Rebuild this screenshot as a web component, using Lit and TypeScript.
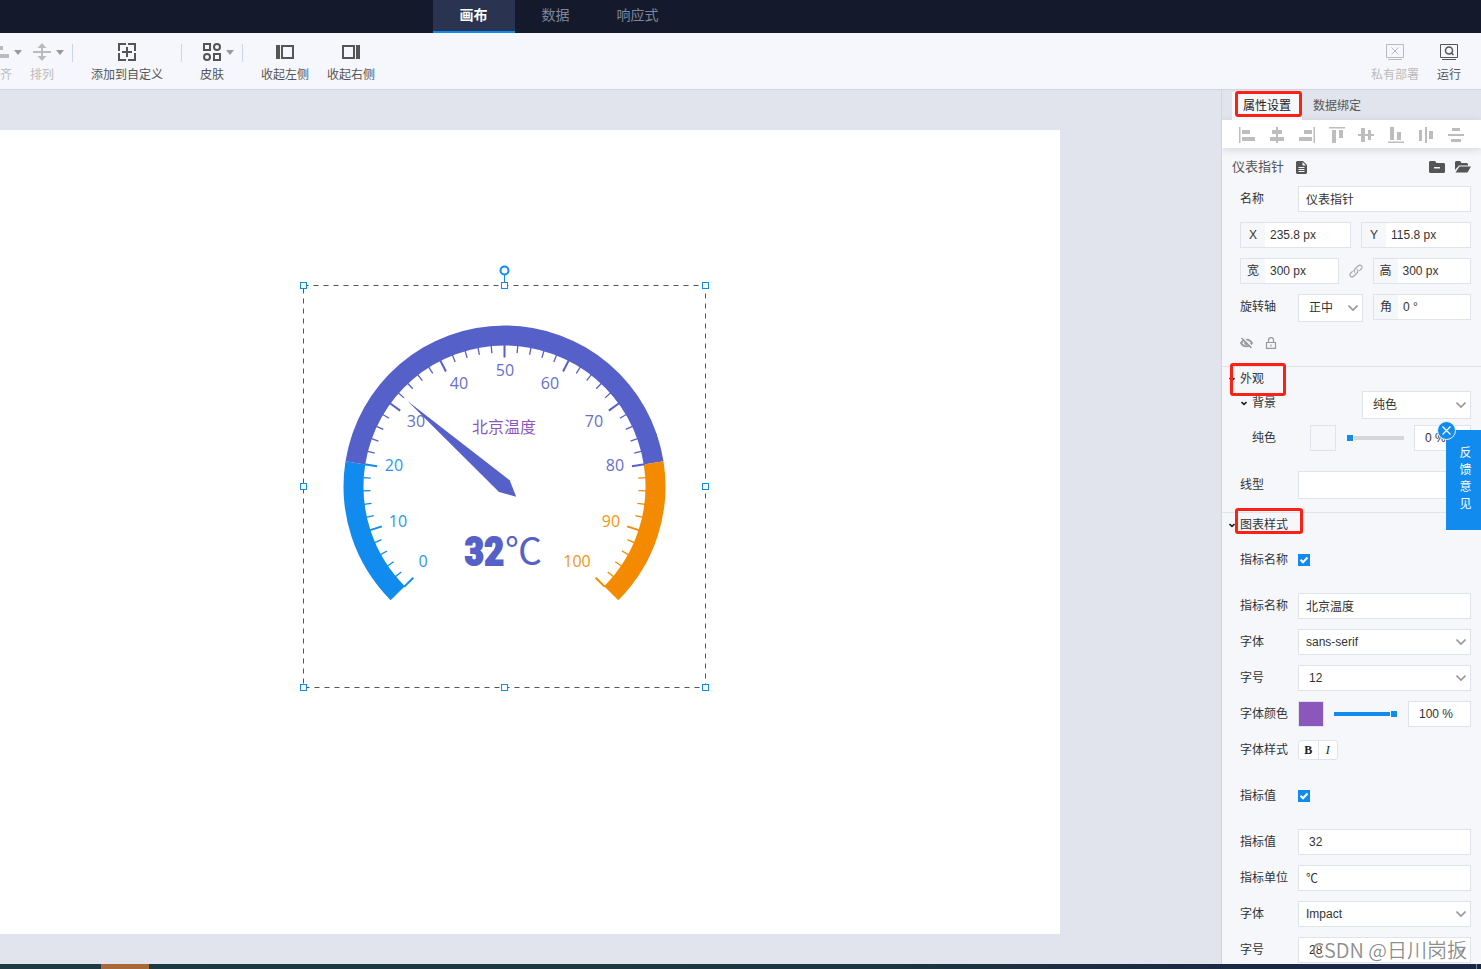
import { LitElement, html, svg, css } from "lit";
import { customElement, state } from "lit/decorators.js";

const FONT = css`"Liberation Sans", "Noto Sans CJK SC", sans-serif`;

const BLUE = "#118bee";
const PURPLE = "#5560c8";
const ORANGE = "#f48a00";

/** Gauge widget with its selection frame, drawn around a 402px square. */
@customElement("gauge-widget")
export class GaugeWidget extends LitElement {
  static styles = css`
    :host { display: block; }
    svg { display: block; overflow: visible; }
    .frame { fill: none; stroke: #555; stroke-dasharray: 5 5; }
    .handle { fill: #fff; stroke: #118bee; }
    .knob { fill: #fff; stroke: #118bee; stroke-width: 2; }
    .stem { stroke: #118bee; }
    .scale { font: 16px "Open Sans", "Noto Sans", sans-serif; text-anchor: middle; opacity: 0.9; }
    .name { font: 16px "Noto Sans CJK SC", sans-serif; text-anchor: middle; fill: #8c57bd; }
    .value { font: bold 39px Impact, "Liberation Sans Narrow", "Roboto Condensed", sans-serif; fill: #5560c8; stroke: #5560c8; stroke-width: 2; text-anchor: end; }
    .unit { font: 37px "Noto Sans CJK SC", sans-serif; fill: #5560c8; }
  `;

  private readonly c = 201.5;
  private readonly labels: [number, number, number][] = [
    [0, 120, 277], [10, 95, 237], [20, 91, 181], [30, 113, 137], [40, 156, 99], [50, 202, 86],
    [60, 247, 99], [70, 291, 137], [80, 312, 181], [90, 308, 237], [100, 274, 277],
  ];

  private point(value: number, r: number) {
    const a = ((225 - value * 2.7) * Math.PI) / 180;
    return [this.c + r * Math.cos(a), this.c - r * Math.sin(a)];
  }

  private arc(from: number, to: number, color: string) {
    const [x0, y0] = this.point(from, 161);
    const [x1, y1] = this.point(to, 161);
    const [x2, y2] = this.point(to, 141);
    const [x3, y3] = this.point(from, 141);
    return svg`<path fill=${color} d="M${x0} ${y0}A161 161 0 0 1 ${x1} ${y1}L${x2} ${y2}A141 141 0 0 0 ${x3} ${y3}Z"></path>`;
  }

  private colorAt(v: number) {
    return v <= 20 ? BLUE : v < 81 ? PURPLE : ORANGE;
  }

  render() {
    const ticks = Array.from({ length: 51 }, (_, i) => i * 2);
    const ends = [0.5, 201.5, 402.5];
    return html`
      <svg width="403" height="403" viewBox="0 0 403 403" role="img" aria-label="北京温度 32℃">
        ${this.arc(0, 20, BLUE)} ${this.arc(20, 80, PURPLE)} ${this.arc(80, 100, ORANGE)}
        ${ticks.map((v) => {
          const major = v % 10 === 0;
          const [x1, y1] = this.point(v, 142);
          const [x2, y2] = this.point(v, major ? 129 : 134);
          return svg`<line x1=${x1} y1=${y1} x2=${x2} y2=${y2} stroke=${this.colorAt(v)} stroke-width=${major ? 2 : 1.3}></line>`;
        })}
        ${this.labels.map(([v, x, y]) => svg`<text class="scale" x=${x} y=${y + 5} fill=${this.colorAt(v)}>${v}</text>`)}
        <text class="name" x="201" y="148">北京温度</text>
        <path fill=${PURPLE} d="M104.5 116L206.7 195.3L213.2 211.8L196 207Z"></path>
        <text class="value" x="201" y="280">32</text>
        <text class="unit" x="202" y="280">℃</text>
        <rect class="frame" x="0.5" y="0.5" width="402" height="402"></rect>
        <line class="stem" x1="201.5" y1="-11" x2="201.5" y2="-2"></line>
        <circle class="knob" cx="201.5" cy="-14.5" r="4"></circle>
        ${ends.flatMap((y) => ends.filter((x) => !(x === 201.5 && y === 201.5)).map(
          (x) => svg`<rect class="handle" x=${x - 3} y=${y - 3} width="6" height="6"></rect>`))}
      </svg>`;
  }
}

@customElement("property-panel")
export class PropertyPanel extends LitElement {
  static styles = css`
    :host { display: block; position: relative; box-sizing: border-box; width: 260px; border-left: 1px solid #ccd5e4; background: #f5f7fb; color: #333; font: 12px/18px ${FONT}; }
    *, *::before, *::after { box-sizing: border-box; }
    .clip { height: 100%; overflow: hidden; }
    button, input, select { font: inherit; color: inherit; margin: 0; border-radius: 0; outline: none; }
    button { padding: 0; border: 0; background: none; cursor: pointer; }
    svg { display: block; }
    .tabs { display: flex; height: 30px; padding: 2px 0 0 10px; background: #e1e4ec; }
    .tab { padding: 0 11px; color: #555; }
    .tab.on { background: #f5f7fb; color: #222; }
    .aligns { display: flex; justify-content: space-between; align-items: center; height: 28px; padding: 2px 17px 0; background: #fff; box-shadow: 0 2px 8px rgba(0, 0, 0, 0.13); fill: #bdbdbd; }
    .head { display: flex; align-items: center; height: 38px; padding: 0 10px; gap: 10px; color: #555; font-size: 13px; }
    .head .title { flex: 0 1 auto; margin-right: 2px; }
    .head .push { margin-left: auto; }
    .rows { display: flex; flex-direction: column; gap: 10px; padding: 0 10px 0 18px; }
    .row { display: grid; grid-template-columns: 58px minmax(0, 1fr); align-items: center; min-height: 26px; }
    .pair { display: grid; grid-template-columns: 111px minmax(0, 1fr); column-gap: 10px; }
    .size { display: grid; grid-template-columns: minmax(0, 1fr) 34px minmax(0, 1fr); align-items: center; justify-items: stretch; }
    .size svg { justify-self: center; }
    .axis { display: grid; grid-template-columns: 58px 65px minmax(0, 1fr); align-items: start; }
    .axis .field { margin-left: 10px; }
    .axis > label { line-height: 26px; }
    .field { display: flex; height: 26px; border: 1px solid #dfe3ec; background: #fff; }
    .field label { width: 24px; background: #f5f7fb; line-height: 24px; text-align: center; }
    .field input { flex: 1; min-width: 0; border: 0; padding: 0 5px; background: transparent; }
    .box { width: 100%; height: 26px; border: 1px solid #dfe3ec; background: #fff; padding: 0 7px; }
    .box.num { padding: 0 10px; }
    .box.han { padding-bottom: 2px; }
    .box.tall { height: 28px; }
    .pick { display: grid; align-items: center; }
    .pick > * { grid-area: 1 / 1; }
    .pick select { appearance: none; }
    .pick svg { justify-self: end; margin-right: 5px; pointer-events: none; }
    .flags { display: flex; align-items: center; gap: 12px; height: 44px; padding: 0 0 2px 18px; }
    .group { border-top: 1px solid #dfe3ec; }
    .fold { display: flex; align-items: center; height: 24px; gap: 5px; padding-left: 7px; }
    .looks { padding: 0 10px 13px 18px; }
    .back { display: grid; grid-template-columns: 122px minmax(0, 1fr); align-items: start; }
    .back .fold { padding-left: 1px; }
    .fill { display: grid; grid-template-columns: 48px 26px minmax(0, 1fr) 57px; column-gap: 10px; align-items: center; margin: 6px 0 20px 12px; }
    .ink { display: grid; grid-template-columns: 26px minmax(0, 1fr) 63px; column-gap: 10px; align-items: center; }
    .color { appearance: none; width: 26px; height: 26px; padding: 0; border: 1px solid #dfe3ec; background: none; }
    .color::-webkit-color-swatch-wrapper { padding: 0; }
    .color::-webkit-color-swatch { border: 0; border-radius: 0; }
    .range { appearance: none; width: 100%; min-width: 0; height: 8px; background: linear-gradient(#d6d6d6, #d6d6d6) center / 100% 4px no-repeat; }
    .range.full { background-image: linear-gradient(#118bee, #118bee); }
    .range::-webkit-slider-thumb { appearance: none; width: 8px; height: 8px; border: 1px solid #f5f7fb; background: #118bee; }
    .check { display: grid; width: 12px; height: 12px; }
    .check > * { grid-area: 1 / 1; }
    .check input { appearance: none; width: 12px; height: 12px; background: #fff; border: 1px solid #ccc; }
    .check input:checked { background: #118bee; border: 0; }
    .check svg { pointer-events: none; }
    .styles { display: flex; width: 40px; height: 20px; border: 1px solid #dfe3ec; border-radius: 3px; background: #fff; font-family: "Liberation Serif", serif; font-size: 12px; }
    .styles button { flex: 1; color: #222; }
    .styles button + button { border-left: 1px solid #dfe3ec; }
    .bold { font-weight: bold; }
    .italic { font-style: italic; }
    .space { margin-bottom: 10px; }
    .details { padding-top: 10px; }
    .mark { position: absolute; border: 3px solid #fb2114; border-radius: 3px; pointer-events: none; }
    .mark.tabmark { left: 13px; top: 1px; width: 67px; height: 26px; }
    .mark.lookmark { left: 8px; top: 273px; width: 56px; height: 33px; }
    .mark.chartmark { left: 13px; top: 418px; width: 68px; height: 26px; }
    .feedback { position: absolute; right: 0; top: 340px; width: 35px; height: 100px; padding: 0 9px 2px 13px; background: #118bee; color: #fff; line-height: 17px; text-align: center; }
    .close { position: absolute; right: 25px; top: 331px; width: 19px; height: 19px; }
    .watermark { position: absolute; right: 14px; bottom: 0; font: 20px/28px "Noto Sans CJK SC", sans-serif; font-weight: 350; color: rgba(120, 120, 120, 0.85); white-space: nowrap; pointer-events: none; text-shadow: 1px 1px 0 rgba(255, 255, 255, 0.7); }
  `;

  private readonly alignIcons = [
    svg`<path d="M0 0h1.500v16H0zM3 3h8v4H3zM3 10h13v4H3z"></path>`,
    svg`<path d="M7 0h2v16H7zM3 3h10v4H3zM1 10h14v4H1z"></path>`,
    svg`<path d="M14.500 0h1.500v16h-1.500zM5 3h8v4H5zM0 10h13v4H0z"></path>`,
    svg`<path d="M0 0h16v1.500H0zM3 3h4v13H3zM10 3h4v8h-4z"></path>`,
    svg`<path d="M0 7h16v2H0zM3 1h4v14H3zM10 3h3v10h-3z"></path>`,
    svg`<path d="M0 14.500h16v1.500H0zM2 0h4v13H2zM9 5h4v8H9z"></path>`,
    svg`<path d="M7 0h2v16H7zM1 3h3v11H1zM11 4h4v8h-4z"></path>`,
    svg`<path d="M0 7h16v2H0zM4 1h8v3H4zM3 12h10v3H3z"></path>`,
  ];

  private chevron() {
    return html`<svg width="10" height="8" viewBox="0 0 10 8" fill="none" stroke="#999" stroke-width="1.600"><path d="M.5 1.500L5 6L9.500 1.500"></path></svg>`;
  }

  private caret() {
    return html`<svg width="6" height="5" viewBox="0 0 6 5" fill="none" stroke="#222" stroke-width="1.600"><path d="M.5 1L3 3.400L5.500 1"></path></svg>`;
  }

  private select(id: string, value: string, cls = "") {
    return html`<span class="pick"><select class="box ${cls}" id=${id}><option>${value}</option></select>${this.chevron()}</span>`;
  }

  private textRow(id: string, label: string, value: string, cls = "") {
    return html`<div class="row"><label for=${id}>${label}</label><input class="box ${cls}" id=${id} .value=${value} /></div>`;
  }

  private selectRow(id: string, label: string, value: string, cls = "") {
    return html`<div class="row"><label for=${id}>${label}</label>${this.select(id, value, cls)}</div>`;
  }

  private checkRow(id: string, label: string) {
    return html`<div class="row space"><label for=${id}>${label}</label>
      <span class="check"><input type="checkbox" id=${id} checked /><svg width="12" height="12" viewBox="0 0 12 12" fill="none" stroke="#fff" stroke-width="2"><path d="M2.500 5.800L5 8.300L9.500 3.500"></path></svg></span></div>`;
  }

  private field(id: string, label: string, value: string) {
    return html`<div class="field"><label for=${id}>${label}</label><input id=${id} .value=${value} /></div>`;
  }

  render() {
    return html`
      <div class="clip">
        <div class="tabs"><button class="tab on">属性设置</button><button class="tab">数据绑定</button></div>
        <div class="aligns">${this.alignIcons.map((i) => html`<button aria-label="对齐"><svg width="16" height="16" viewBox="0 0 16 16">${i}</svg></button>`)}</div>
        <div class="head">
          <span class="title">仪表指针</span>
          <svg width="11" height="13" viewBox="0 0 11 13"><path fill="#555" fill-rule="evenodd" d="M1 0h6l4 4v8l-1 1H1l-1-1V1zM6.500 1v3.500H10zM2.500 6v1h6V6zM2.500 8v1h6V8zM2.500 10v1h6v-1z"></path></svg>
          <svg class="push" width="16" height="12" viewBox="0 0 16 12"><path fill="#555" fill-rule="evenodd" d="M1 0h5l1.500 2H15l1 1v8l-1 1H1l-1-1V1zM5 6v1.500h6V6z"></path></svg>
          <svg width="16" height="12" viewBox="0 0 16 12"><path fill="#555" d="M0 9V1l1-1h4l1.500 2H12l1 1v1.500H4zM.5 11.500L4.500 5.500H16L12.500 11.500z"></path></svg>
        </div>
        <div class="rows">
          ${this.textRow("name", "名称", "仪表指针", "han")}
          <div class="pair">${this.field("x", "X", "235.8 px")}${this.field("y", "Y", "115.8 px")}</div>
          <div class="size">${this.field("w", "宽", "300 px")}
            <svg width="14" height="14" viewBox="0 0 14 14" fill="none" stroke="#aaa" stroke-width="1.200"><path d="M6 8.500C4.800 7.300 5 6 6 5L9 2C10.200.8 11.500.8 12.400 1.700C13.300 2.600 13.300 3.900 12.200 5L10.300 6.900M8 5.500C9.200 6.700 9 8 8 9L5 12C3.800 13.200 2.500 13.200 1.600 12.300C.7 11.400.7 10.100 1.800 9L3.700 7.100"></path></svg>
            ${this.field("h", "高", "300 px")}</div>
          <div class="axis"><label for="axis">旋转轴</label>${this.select("axis", "正中", "num tall")}${this.field("angle", "角", "0 °")}</div>
        </div>
        <div class="flags">
          <button aria-label="隐藏"><svg width="13" height="12" viewBox="0 0 13 12" fill="none" stroke="#999"><path d="M1 6C3.500 1.500 9.500 1.500 12 6C9.500 10.500 3.500 10.500 1 6Z" stroke-width="1.800"></path><circle cx="6.500" cy="6" r="1.800" fill="#999"></circle><path d="M2.500 0L12.500 10" stroke="#f5f7fb" stroke-width="1.500"></path><path d="M1.500 1L11.500 11" stroke-width="1.400"></path></svg></button>
          <button aria-label="锁定"><svg width="12" height="12" viewBox="0 0 12 12" fill="none" stroke="#999" stroke-width="1.200"><path d="M1.500 5.500H10.500V11.400H1.500ZM3.500 5.500V3C3.500-.2 8.500-.2 8.500 3V5.500M6 7.500V9.500"></path></svg></button>
        </div>
        <section class="group">
          <div class="fold">${this.caret()}外观</div>
          <div class="looks">
            <div class="back"><label class="fold" for="bg">${this.caret()}背景</label>${this.select("bg", "纯色", "num tall")}</div>
            <div class="fill"><label for="fillcolor">纯色</label>
              <input class="color" type="color" id="fillcolor" value="#f5f7fb" />
              <input class="range" type="range" min="0" max="100" value="0" aria-label="不透明度" />
              <input class="box num" value="0 %" aria-label="不透明度" /></div>
            <div class="row"><label for="line">线型</label><input class="box tall" id="line" /></div>
          </div>
        </section>
        <section class="group">
          <div class="fold">${this.caret()}图表样式</div>
          <div class="rows details">
            ${this.checkRow("showname", "指标名称")}
            ${this.textRow("metric", "指标名称", "北京温度", "han")}
            ${this.selectRow("font", "字体", "sans-serif")}
            ${this.selectRow("fontsize", "字号", "12", "num")}
            <div class="row"><label for="ink">字体颜色</label><div class="ink">
              <input class="color" type="color" id="ink" value="#8c57bd" />
              <input class="range full" type="range" min="0" max="100" value="100" aria-label="不透明度" />
              <input class="box num" value="100 %" aria-label="不透明度" /></div></div>
            <div class="row space"><span>字体样式</span><div class="styles"><button class="bold">B</button><button class="italic">I</button></div></div>
            ${this.checkRow("showvalue", "指标值")}
            ${this.textRow("value", "指标值", "32", "num")}
            ${this.textRow("unit", "指标单位", "℃", "han")}
            ${this.selectRow("vfont", "字体", "Impact")}
            ${this.selectRow("vsize", "字号", "28", "num")}
          </div>
        </section>
      </div>
      <div class="mark tabmark"></div><div class="mark lookmark"></div><div class="mark chartmark"></div>
      <button class="feedback">反馈意见</button>
      <button class="close" aria-label="关闭"><svg width="19" height="19" viewBox="0 0 19 19"><circle cx="9.500" cy="9.500" r="9" fill="#118bee" stroke="#e8f3fd"></circle><path d="M5.500 5.500L13.500 13.500M13.500 5.500L5.500 13.500" stroke="#fff" stroke-width="1.200"></path></svg></button>
      <div class="watermark">CSDN @日川岗扳</div>`;
  }
}

@customElement("app-root")
export class AppRoot extends LitElement {
  static styles = css`
    :host { display: grid; grid-template-rows: 33px 57px minmax(0, 1fr) 5px; height: 100vh; overflow: hidden; background: #e1e4ec; color: #555; font: 12px/18px ${FONT}; }
    *, *::before, *::after { box-sizing: border-box; }
    button { font: inherit; color: inherit; margin: 0; padding: 0; border: 0; background: none; cursor: pointer; }
    svg { display: block; }
    .top { display: flex; padding-left: calc(50% - 308px); background: #14192b; }
    .mode { padding: 0 27px 2px; color: #7f8699; font-size: 14px; line-height: 31px; }
    .mode:last-child { padding: 0 20px 2px; }
    .mode.on { padding-bottom: 0; border-bottom: 2px solid #0b8bf0; background: #2a334f; color: #fff; font-weight: bold; }
    .bar { display: flex; border-bottom: 1px solid #ccd5e4; background: #f5f7fc; padding-right: 20px; overflow: hidden; }
    .tools { display: flex; margin-left: -12px; align-items: flex-start; }
    .tool { display: grid; grid-template-columns: auto; justify-items: center; row-gap: 4px; padding-top: 9px; white-space: nowrap; }
    .tool.menu { grid-template-columns: 24px 8px; column-gap: 2px; align-items: center; }
    .tool.off { color: #bbb; }
    .tool .end { justify-self: end; }
    .icon { display: grid; place-items: center; height: 20px; }
    .sep { width: 1px; height: 18px; margin: 11px 18px 0 8px; background: #ccd5e4; }
    .sep.wide { margin-left: 18px; }
    .gap { width: 8px; }
    .more { width: 18px; }
    .right { display: flex; gap: 18px; margin-left: auto; align-items: flex-start; }
    .work { display: grid; grid-template-columns: minmax(0, 1fr) 260px; min-height: 0; }
    .stage { padding: 40px 161px 30px 0; }
    .canvas { position: relative; height: 100%; background: #fff; }
    .gauge { position: absolute; left: 303px; top: 155px; }
    .dock { display: flex; background: linear-gradient(90deg, #1f3a42, #1d3540 60%, #1b2844 85%); }
    .app { width: 48px; margin-left: 101px; background: #a7693a; }
    .peek { width: 1px; margin: 0 4px 0 auto; background: #77829a; }
  `;

  @state() private mode = "画布";

  private tri() {
    return html`<svg width="8" height="5" viewBox="0 0 8 5"><path fill="#999" d="M0 0h8L4 5z"></path></svg>`;
  }

  render() {
    return html`
      <nav class="top">${["画布", "数据", "响应式"].map((m) => html`<button class="mode ${this.mode === m ? "on" : ""}" @click=${() => (this.mode = m)}>${m}</button>`)}</nav>
      <header class="bar">
        <div class="tools">
          <button class="tool menu off" aria-label="对齐"><span class="icon"><svg width="18" height="18" viewBox="0 0 18 18" fill="#bbb"><path d="M0 0h1v18H0zM3 3h9v4H3zM3 11h15v4H3z"></path></svg></span>${this.tri()}<span class="end">齐</span></button>
          <i class="gap"></i>
          <button class="tool menu off"><span class="icon"><svg width="18" height="18" viewBox="0 0 18 18" fill="#bbb"><path d="M0 8h18v2H0z"></path><path d="M8 3h2v12H8z"></path><path d="M4.500 5L9 0L13.500 5z"></path><path d="M4.500 13L9 18L13.500 13z"></path></svg></span>${this.tri()}<span>排列</span></button>
          <i class="sep"></i>
          <button class="tool"><span class="icon"><svg width="18" height="18" viewBox="0 0 18 18" fill="none" stroke="#555" stroke-width="2"><path d="M8 1H1V8M10 1H17V8M8 17H1V10M10 17H17V10M9 4V14M4 9H14"></path></svg></span><span>添加到自定义</span></button>
          <i class="sep wide"></i>
          <button class="tool menu"><span class="icon"><svg width="18" height="18" viewBox="0 0 18 18" fill="none" stroke="#555" stroke-width="2"><path d="M1 1h6v6H1zM11 11h6v6h-6z"></path><circle cx="14" cy="4" r="3"></circle><circle cx="4" cy="14" r="3"></circle></svg></span>${this.tri()}<span>皮肤</span></button>
          <i class="sep"></i>
          <button class="tool"><span class="icon"><svg width="18" height="14" viewBox="0 0 18 14"><path fill="#555" d="M0 0h4v14H0z"></path><path fill="none" stroke="#555" stroke-width="2" d="M6 1h11v12H6z"></path></svg></span><span>收起左侧</span></button>
          <i class="more"></i>
          <button class="tool"><span class="icon"><svg width="18" height="14" viewBox="0 0 18 14"><path fill="#555" d="M14 0h4v14h-4z"></path><path fill="none" stroke="#555" stroke-width="2" d="M1 1h11v12H1z"></path></svg></span><span>收起右侧</span></button>
        </div>
        <div class="right">
          <button class="tool off"><span class="icon"><svg width="18" height="16" viewBox="0 0 18 16" fill="none" stroke="#bbb"><path d="M.5.5h17v13H.5zM2 15.500h14M5.500 3.500l7 7M12.500 3.500l-7 7"></path></svg></span><span>私有部署</span></button>
          <button class="tool"><span class="icon"><svg width="18" height="16" viewBox="0 0 18 16" fill="none" stroke="#555"><path d="M.5.5h17v13H.5zM2 15.500h14"></path><circle cx="9" cy="6.500" r="3.500" stroke-width="1.500"></circle><path d="M11 8.500l2.500 2.500" stroke-width="1.500"></path></svg></span><span>运行</span></button>
        </div>
      </header>
      <main class="work">
        <div class="stage"><div class="canvas"><gauge-widget class="gauge"></gauge-widget></div></div>
        <property-panel></property-panel>
      </main>
      <footer class="dock"><span class="app"></span><span class="peek"></span></footer>`;
  }
}
